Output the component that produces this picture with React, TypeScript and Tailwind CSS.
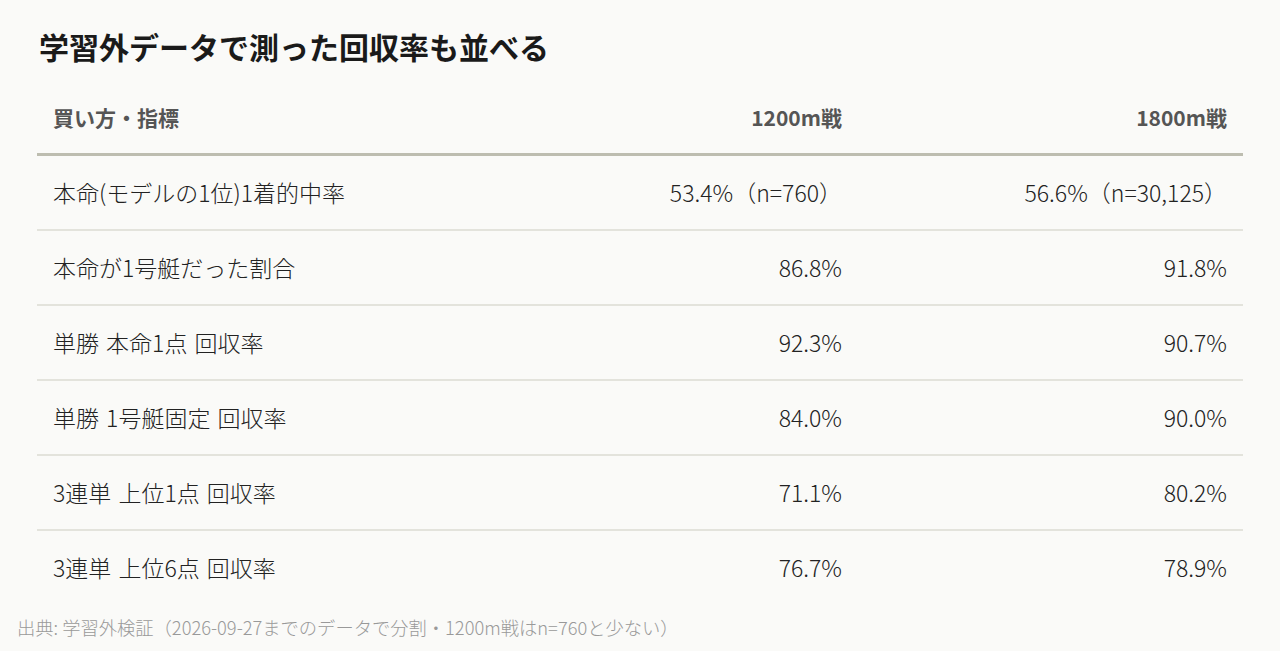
const rows: [string, string, string][] = [
  ['本命(モデルの1位)1着的中率', '53.4%（n=760）', '56.6%（n=30,125）'],
  ['本命が1号艇だった割合', '86.8%', '91.8%'],
  ['単勝 本命1点 回収率', '92.3%', '90.7%'],
  ['単勝 1号艇固定 回収率', '84.0%', '90.0%'],
  ['3連単 上位1点 回収率', '71.1%', '80.2%'],
  ['3連単 上位6点 回収率', '76.7%', '78.9%'],
];

export default function App() {
  return (
    <div
      className="min-h-[651px] w-[1280px] bg-[#fafaf8] px-[17px] pt-[24px]"
      style={{ fontFamily: '"Noto Sans CJK JP", "Noto Sans", sans-serif' }}
    >
      <div className="mx-[20px]">
        <h1 className="pl-[2px] text-[30px] font-bold leading-[45px] text-[#1a1a1a]">
          学習外データで測った回収率も並べる
        </h1>

        <div className="mt-[12px] grid grid-cols-[436px_385px_385px]">
          {/* ヘッダー */}
          <div className="border-b-[3px] border-[#bdbdb0] px-4 pt-[21px] pb-[21px] text-[21px] font-bold leading-[30px] text-[#555]">
            買い方・指標
          </div>
          <div className="border-b-[3px] border-[#bdbdb0] px-4 pt-[21px] pb-[21px] text-right text-[21px] font-bold leading-[30px] text-[#555]">
            1200m戦
          </div>
          <div className="border-b-[3px] border-[#bdbdb0] px-4 pt-[21px] pb-[21px] text-right text-[21px] font-bold leading-[30px] text-[#555]">
            1800m戦
          </div>

          {rows.map((r, i) => {
            const line = i < rows.length - 1 ? 'border-b-2 border-[#e3e3dc]' : '';
            return [
              <div key={`${i}a`} className={`${line} px-4 py-[20px] text-[23px] font-light leading-[33px] text-[#222] [word-spacing:2px]`}>
                {r[0]}
              </div>,
              <div key={`${i}b`} className={`${line} px-4 py-[20px] text-right text-[23px] font-light leading-[33px] text-[#222]`}>
                {r[1]}
              </div>,
              <div key={`${i}c`} className={`${line} px-4 py-[20px] text-right text-[23px] font-light leading-[33px] text-[#222]`}>
                {r[2]}
              </div>,
            ];
          })}
        </div>
      </div>

      <p className="mt-[11px] text-[18.3px] font-light leading-[25px] text-[#999]">
        出典: 学習外検証（2026-09-27までのデータで分割・1200m戦はn=760と少ない）
      </p>
    </div>
  );
}
